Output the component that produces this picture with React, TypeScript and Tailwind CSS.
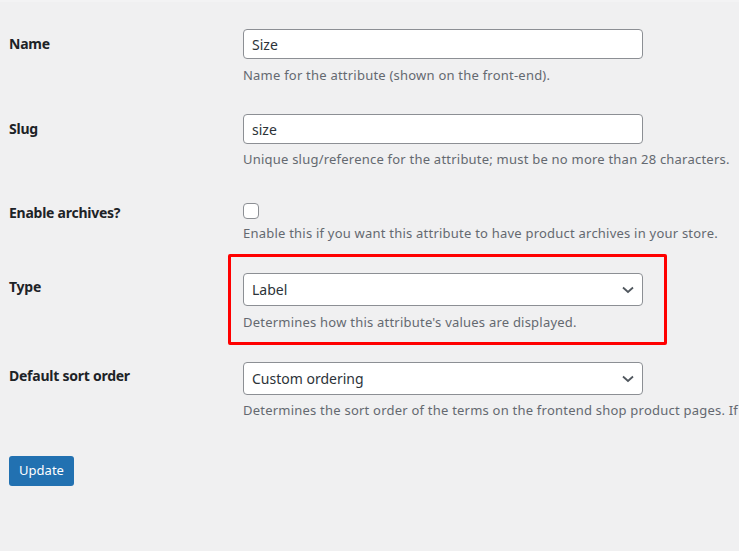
import React from "react";

const font = { fontFamily: '"Noto Sans", "Open Sans", sans-serif' };

function Chevron() {
  return (
    <svg width="12" height="8" viewBox="0 0 12 8" className="absolute right-[8px] top-1/2 -translate-y-1/2">
      <path d="M1 1.5l5 4.5 5-4.5" fill="none" stroke="#50575e" strokeWidth="1.8" />
    </svg>
  );
}

function Select({ value }: { value: string }) {
  return (
    <div className="relative flex h-[33px] w-[400px] items-center rounded-[4px] border border-[#8c8f94] bg-white pl-[8px] text-[14px] text-[#2c3338]">
      {value}
      <Chevron />
    </div>
  );
}

function Input({ value }: { value: string }) {
  return (
    <div className="flex h-[30px] w-[400px] items-center rounded-[4px] border border-[#8c8f94] bg-white pl-[8px] text-[14px] text-[#2c3338]">
      {value}
    </div>
  );
}

function Desc({ children, mt }: { children: React.ReactNode; mt: string }) {
  return (
    <p className={`${mt} whitespace-nowrap text-[13px] leading-[18px] tracking-[0.22px] text-[#646970]`}>{children}</p>
  );
}

function Row({ label, pt, children }: { label: string; pt: string; children: React.ReactNode }) {
  return (
    <div className="flex">
      <div className={`w-[234px] shrink-0 ${pt} text-[14px] font-bold leading-[18px] tracking-[-0.25px] text-[#1d2327]`}>
        {label}
      </div>
      <div className="relative">{children}</div>
    </div>
  );
}

export default function App() {
  return (
    <div className="h-[551px] w-[739px] overflow-hidden bg-[#f0f0f1]" style={font}>
      <div className="h-[2px] bg-[#f3f3f4]" />
      <div className="pl-[9px] pt-[27px]">
        <Row label="Name" pt="pt-[6px]">
          <Input value="Size" />
          <Desc mt="mt-[7px]">Name for the attribute (shown on the front-end).</Desc>
        </Row>
        <div className="h-[30px]" />
        <Row label="Slug" pt="pt-[6px]">
          <Input value="size" />
          <Desc mt="mt-[6px]">Unique slug/reference for the attribute; must be no more than 28 characters.</Desc>
        </Row>
        <div className="h-[35px]" />
        <Row label="Enable archives?" pt="pt-[1px]">
          <div className="h-[16px] w-[16px] rounded-[4px] border border-[#8c8f94] bg-white" />
          <Desc mt="mt-[5px]">Enable this if you want this attribute to have product archives in your store.</Desc>
        </Row>
        <div className="h-[31px]" />
        <Row label="Type" pt="pt-[5px]">
          <div className="absolute left-[-15px] top-[-19px] h-[91px] w-[439px] rounded-[2px] border-[3px] border-[#ff0000]" />
          <Select value="Label" />
          <Desc mt="mt-[7px]">Determines how this attribute's values are displayed.</Desc>
        </Row>
        <div className="h-[31px]" />
        <Row label="Default sort order" pt="pt-[5px]">
          <Select value="Custom ordering" />
          <Desc mt="mt-[6px]">Determines the sort order of the terms on the frontend shop product pages. If</Desc>
        </Row>
        <div className="h-[37px]" />
        <button className="flex h-[30px] w-[65px] items-center justify-center rounded-[3px] bg-[#2271b1] text-[13px] text-white">
          Update
        </button>
      </div>
    </div>
  );
}
